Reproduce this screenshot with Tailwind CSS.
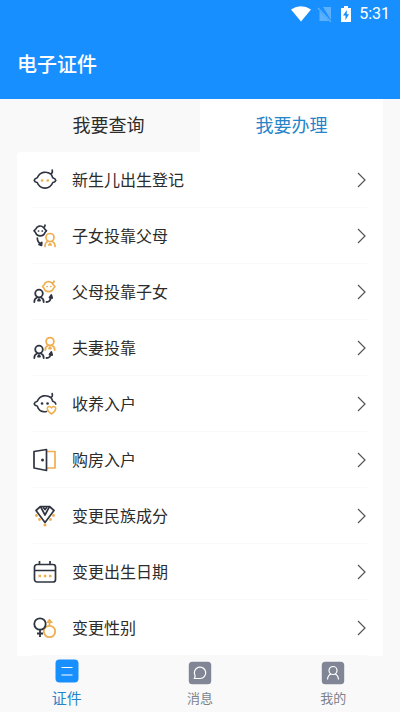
<!DOCTYPE html>
<html lang="zh-CN">
<head>
<meta charset="utf-8">
<meta name="viewport" content="width=device-width, initial-scale=1">
<title>电子证件</title>
<script src="https://cdn.jsdelivr.net/npm/@tailwindcss/browser@4"></script>
</head>
<body class="flex min-h-screen flex-col bg-[#f9f9f9] font-[Roboto,'Noto_Sans_CJK_SC',sans-serif] text-[#2c2c2c]">
<header class="bg-[#188fff] pb-4 text-white">
  <div class="flex h-7 items-center justify-end pr-2.5">
    <svg class="mr-1.5 h-4 w-5" viewBox="0 0 20 16" fill="currentColor" aria-hidden="true"><path d="M0 3.500Q10-2.800 20 3.500L10 15.500Z"/></svg>
    <svg class="mr-2 h-4 w-4" viewBox="0 0 16 16" aria-hidden="true"><path d="M6 1h8v13zM2.500 5 12 15H2.500z" fill="#5db1fc"/><path d="M1 2l13 14" stroke="#5db1fc" stroke-width="1.300"/></svg>
    <svg class="mr-2 h-4 w-2.5" viewBox="0 0 10 16" aria-hidden="true"><path d="M3 0h4v2h3v14H0V2h3z" fill="currentColor"/><path d="M5.800 4 2 9.500h2.500V14L8 8.300H5.800z" fill="#188fff"/></svg>
    <span class="text-base leading-5">5:31</span>
  </div>
  <h1 class="mt-5 px-[17px] text-xl leading-[35px] font-medium">电子证件</h1>
</header>
<main class="mx-[17px] flex-1">
  <div class="grid h-[53px] grid-cols-2 text-lg" role="tablist">
    <button type="button" role="tab" aria-selected="false">我要查询</button>
    <button type="button" role="tab" aria-selected="true" class="bg-white text-[#2684c9]">我要办理</button>
  </div>
  <ul class="rounded-tl-sm bg-white px-4 text-base">
    <li class="border-b border-[#f9f9f9]"><a href="#" class="flex h-[55px] items-center">
      <svg class="mr-[15px] h-6 w-6" viewBox="0 0 24 24" fill="none" stroke="#2f3440" stroke-width="1.600" stroke-linecap="round" stroke-linejoin="round" aria-hidden="true"><path d="M17.800 6C14 3.200 7 3.200 4.300 9.800 3 10.200 1.500 11 1.200 12.500c.5 1.300 1.800 1.800 3 2 2.800 7.500 12.800 7.500 15.600 0 1.200-.2 2.500-.7 3-2-.3-1.500-1.800-2.300-3.100-2.700-.4-1.500-1-2.800-1.900-3.800 1.500-.5 1.900-2 1.400-4"/><path d="M9 12.500h.1M14.700 12.500h.1" stroke="#efae50" stroke-width="2.600"/></svg>
      <span class="flex-1 pt-0.5">新生儿出生登记</span>
      <svg class="h-4 w-2.5" viewBox="0 0 10 16" fill="none" stroke="#555" stroke-width="1.200" aria-hidden="true"><path d="m1 1 7 7-7 7"/></svg></a></li>
    <li class="border-b border-[#f9f9f9]"><a href="#" class="flex h-[55px] items-center">
      <svg class="mr-[15px] h-6 w-6" viewBox="0 0 24 24" fill="none" stroke="#2f3440" stroke-width="1.700" stroke-linecap="round" stroke-linejoin="round" aria-hidden="true"><path d="M10.500 3.500C8 .8 4 2 2.800 5L1 6.800 2.500 8.500C4 13 10.500 13 12 8.500l1.500-1.700-1.500-1.500-1.500-1.800c1.300-.3 1.600-1 1.500-2.300"/><path d="M5.500 7h.1M9.200 7h.1"/><path d="M4.300 14c0 3 1 5 4 6"/><path d="m8.800 18.500-.3 3-2.500-1z" fill="#2f3440"/><g stroke="#efae50"><circle cx="17" cy="13.500" r="4"/><path d="M12 22.500c0-2.700 1-4.500 3-5M22 22.500c0-2.700-1-4.500-3-5M15.800 21l1.200-1.500 1.200 1.500z"/></g></svg>
      <span class="flex-1 pt-0.5">子女投靠父母</span>
      <svg class="h-4 w-2.5" viewBox="0 0 10 16" fill="none" stroke="#555" stroke-width="1.200" aria-hidden="true"><path d="m1 1 7 7-7 7"/></svg></a></li>
    <li class="border-b border-[#f9f9f9]"><a href="#" class="flex h-[55px] items-center">
      <svg class="mr-[15px] h-6 w-6" viewBox="0 0 24 24" fill="none" stroke="#2f3440" stroke-width="1.800" stroke-linecap="round" stroke-linejoin="round" aria-hidden="true"><circle cx="6" cy="13.500" r="3.800"/><path d="M1.300 22c0-2.700 1-4 3-4.500M10.700 22c0-2.700-1-4-3-4.500M5 20.500 6 19l1 1.500z"/><path d="M13.500 22c3 0 4-1.500 4.300-4.500"/><path d="m16.500 17.500 1.800-2.500.9 3z" fill="#2f3440"/><g stroke="#efae50" stroke-width="1.700"><path d="M19 3C16 .5 12 1.500 11 5L9.500 6.500 11 8.200c1.500 4.500 8 4.500 9.500 0L22 6.500 20.500 5 19 3c1.500-.2 2-.8 2-2"/><path d="M14 6.500h.1M17.700 6.500h.1"/></g></svg>
      <span class="flex-1 pt-0.5">父母投靠子女</span>
      <svg class="h-4 w-2.5" viewBox="0 0 10 16" fill="none" stroke="#555" stroke-width="1.200" aria-hidden="true"><path d="m1 1 7 7-7 7"/></svg></a></li>
    <li class="border-b border-[#f9f9f9]"><a href="#" class="flex h-[55px] items-center">
      <svg class="mr-[15px] h-6 w-6" viewBox="0 0 24 24" fill="none" stroke="#2f3440" stroke-width="1.800" stroke-linecap="round" stroke-linejoin="round" aria-hidden="true"><circle cx="6" cy="13.500" r="3.800"/><path d="M1.300 22c0-2.700 1-4 3-4.500M10.700 22c0-2.700-1-4-3-4.500M5 20.500 6 19l1 1.500z"/><path d="M13.500 22c3 0 4-1.500 4.300-4"/><path d="m16.500 18.500 1.800-2.500.9 3z" fill="#2f3440"/><g stroke="#efae50"><circle cx="17" cy="5.500" r="3.900"/><path d="M12.300 14c0-2.700 1-4 3-4.500M21.700 14c0-2.700-1-4-3-4.500M16 12.500 17 11l1 1.500z"/></g></svg>
      <span class="flex-1 pt-0.5">夫妻投靠</span>
      <svg class="h-4 w-2.5" viewBox="0 0 10 16" fill="none" stroke="#555" stroke-width="1.200" aria-hidden="true"><path d="m1 1 7 7-7 7"/></svg></a></li>
    <li class="border-b border-[#f9f9f9]"><a href="#" class="flex h-[55px] items-center">
      <svg class="mr-[15px] h-6 w-6" viewBox="0 0 24 24" fill="none" stroke="#2f3440" stroke-width="1.600" stroke-linecap="round" stroke-linejoin="round" aria-hidden="true"><path d="M13.500 19.500C9.500 20.300 5.700 18.500 4.200 14c-1.200-.2-2.500-.7-3-2 .3-1.500 1.800-2.300 3.100-2.700C7 2.700 14 2.700 17.800 5.500c1.500-.5 1.900-2 1.400-4M17.800 5.500c.9 1 1.500 2.300 1.900 3.800 1.300.4 2.800 1.200 3.100 2.700"/><path d="M9 11.500h.1M14.500 11.500h.1" stroke-width="2.600"/><path d="M18.500 22c-5.500-3.500-5-7.500-2.200-7.500 1 0 1.700.6 2.200 1.500.5-.9 1.200-1.500 2.200-1.500 2.800 0 3.300 4-2.200 7.500z" stroke="#efae50" stroke-width="1.500"/></svg>
      <span class="flex-1 pt-0.5">收养入户</span>
      <svg class="h-4 w-2.5" viewBox="0 0 10 16" fill="none" stroke="#555" stroke-width="1.200" aria-hidden="true"><path d="m1 1 7 7-7 7"/></svg></a></li>
    <li class="border-b border-[#f9f9f9]"><a href="#" class="flex h-[55px] items-center">
      <svg class="mr-[15px] h-6 w-6" viewBox="0 0 24 24" fill="none" stroke="#2f3440" stroke-width="1.700" stroke-linejoin="round" aria-hidden="true"><path d="M14 3.500h8v16.500h-8" stroke="#efae50"/><path d="M1 3.500 13.500 1.500v21L1 20z"/><circle cx="9.500" cy="12" r="1.500" fill="#2f3440" stroke="none"/></svg>
      <span class="flex-1 pt-0.5">购房入户</span>
      <svg class="h-4 w-2.5" viewBox="0 0 10 16" fill="none" stroke="#555" stroke-width="1.200" aria-hidden="true"><path d="m1 1 7 7-7 7"/></svg></a></li>
    <li class="border-b border-[#f9f9f9]"><a href="#" class="flex h-[55px] items-center">
      <svg class="mr-[15px] h-6 w-6" viewBox="0 0 24 24" fill="none" stroke="#2f3440" stroke-width="1.700" stroke-linejoin="round" aria-hidden="true"><path d="M3 6.500 7.500 2.500h9L21 6.500 12 18.500z"/><path d="M7.500 2.500 12 11l4.500-8.500M10 3l2 2.500L14 3"/><g fill="#efae50" stroke="none"><circle cx="3.500" cy="11.500" r="1.400"/><circle cx="6.500" cy="15.500" r="1.400"/><circle cx="12" cy="21" r="1.600"/><circle cx="17.500" cy="15.500" r="1.400"/><circle cx="20.500" cy="11.500" r="1.400"/></g></svg>
      <span class="flex-1 pt-0.5">变更民族成分</span>
      <svg class="h-4 w-2.5" viewBox="0 0 10 16" fill="none" stroke="#555" stroke-width="1.200" aria-hidden="true"><path d="m1 1 7 7-7 7"/></svg></a></li>
    <li class="border-b border-[#f9f9f9]"><a href="#" class="flex h-[55px] items-center">
      <svg class="mr-[15px] h-6 w-6" viewBox="0 0 24 24" fill="none" stroke="#2f3440" stroke-width="1.700" aria-hidden="true"><rect x="1.500" y="4.500" width="21" height="17.500" rx="2.500"/><path d="M1.500 10.500h21M6.500 1V4.500M17 1V4.500"/><path d="M5.500 16H8M10.800 16h2.500M16 16h2.500" stroke="#efae50" stroke-width="2.600"/></svg>
      <span class="flex-1 pt-0.5">变更出生日期</span>
      <svg class="h-4 w-2.5" viewBox="0 0 10 16" fill="none" stroke="#555" stroke-width="1.200" aria-hidden="true"><path d="m1 1 7 7-7 7"/></svg></a></li>
    <li class="border-b border-[#f9f9f9]"><a href="#" class="flex h-[55px] items-center">
      <svg class="mr-[15px] h-6 w-6" viewBox="0 0 24 24" fill="none" stroke="#2f3440" stroke-width="1.800" aria-hidden="true"><g stroke="#efae50"><circle cx="16.500" cy="15.500" r="5.700"/><path d="M16.500 10V4M14.800 6l1.700-2 1.700 2z"/></g><circle cx="7" cy="8" r="5.700"/><path d="M7 14v7M4 17.500h6"/></svg>
      <span class="flex-1 pt-0.5">变更性别</span>
      <svg class="h-4 w-2.5" viewBox="0 0 10 16" fill="none" stroke="#555" stroke-width="1.200" aria-hidden="true"><path d="m1 1 7 7-7 7"/></svg></a></li>
  </ul>
</main>
<nav class="grid h-14 grid-cols-3 text-[13px] text-[#7d838c]">
  <a href="#" class="flex flex-col items-center gap-1 pt-[3px] text-[#2684c9]" aria-current="page">
    <svg class="h-6 w-6" viewBox="0 0 24 24" aria-hidden="true"><rect x=".5" y=".5" width="23" height="23" rx="4" fill="#188fff"/><path d="M6.500 8.500h11M6.500 16h11" stroke="#fff" stroke-width="1.200"/></svg>
    <span class="text-[15px] leading-6">证件</span></a>
  <a href="#" class="flex flex-col items-center gap-1 pt-[5px]">
    <svg class="h-6 w-6" viewBox="0 0 24 24" aria-hidden="true"><rect x=".8" y=".8" width="22.400" height="22.400" rx="3.500" fill="#808695"/><path d="M6.200 17.500h6A5.700 5.700 0 1 0 7 14.500c.3 1.200 0 2.200-.8 3z" fill="none" stroke="#fff" stroke-width="1.200" stroke-linejoin="round"/></svg>
    <span class="leading-5">消息</span></a>
  <a href="#" class="flex flex-col items-center gap-1 pt-[5px]">
    <svg class="h-6 w-6" viewBox="0 0 24 24" aria-hidden="true"><rect x=".8" y=".8" width="22.400" height="22.400" rx="3.500" fill="#808695"/><g fill="none" stroke="#fff" stroke-width="1.200"><circle cx="12" cy="9.500" r="4"/><path d="M6.500 18.500c.2-3 1.500-4.800 3.500-5.500M17.500 18.500c-.2-3-1.500-4.800-3.500-5.500"/></g></svg>
    <span class="leading-5">我的</span></a>
</nav>
</body>
</html>
